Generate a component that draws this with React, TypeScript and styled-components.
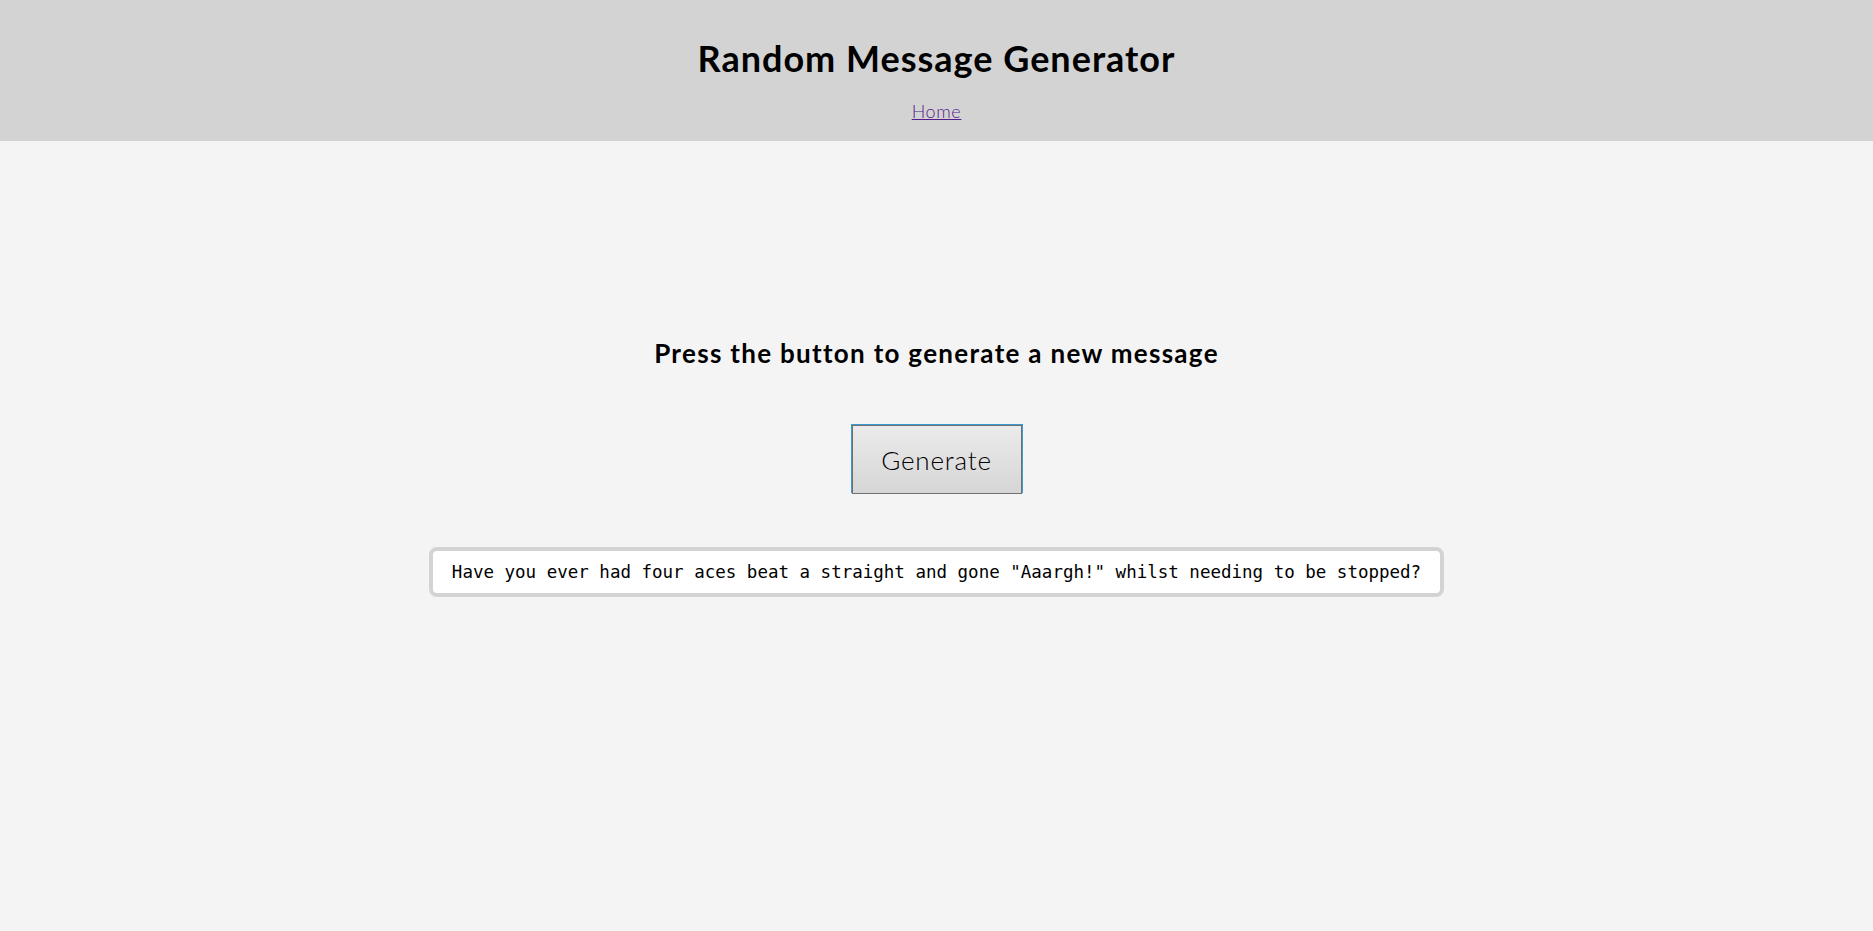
import styled, { createGlobalStyle } from "styled-components";

const GlobalStyle = createGlobalStyle`
	html, body {
		margin: 0;
		padding: 0;
		background: #f4f4f4;
		font-family: Lato, "Open Sans", sans-serif;
		color: #000;
	}
`;

const Page = styled.div`
	min-height: 931px;
	background: #f4f4f4;
`;

const Header = styled.header`
	background: #d3d3d3;
	height: 141px;
	box-sizing: border-box;
	padding-top: 38px;
	display: flex;
	flex-direction: column;
	align-items: center;
`;

const Title = styled.h1`
	margin: 0;
	font-size: 36px;
	line-height: 40px;
	font-weight: 700;
	letter-spacing: 1px;
`;

const Nav = styled.nav`
	margin-top: 23px;
	font-size: 18px;
	line-height: 20px;
`;

const NavLink = styled.a`
	color: #551a8b;
	font-weight: 300;
	letter-spacing: 0.6px;
	text-decoration: underline;
`;

const Main = styled.main`
	display: flex;
	flex-direction: column;
	align-items: center;
	padding-top: 197px;
`;

const Prompt = styled.h2`
	margin: 0;
	font-size: 26px;
	line-height: 30px;
	font-weight: 700;
	letter-spacing: 1.3px;
`;

const GenerateButton = styled.button`
	margin-top: 57px;
	width: 170px;
	height: 69px;
	font-family: Lato, "Open Sans", sans-serif;
	font-size: 26px;
	font-weight: 300;
	letter-spacing: 0.8px;
	color: #000;
	background: linear-gradient(#ebebeb, #d6d6d6);
	border: 1px solid #707070;
	box-shadow: -1px -1px 0 #3b9ad0, 1px -1px 0 #3b9ad0;
	cursor: pointer;
`;

const MessageBox = styled.div`
	margin-top: 53px;
	background: #fff;
	border: 4px solid #d3d3d3;
	border-radius: 8px;
	padding: 0 19px;
	height: 42px;
	display: flex;
	align-items: center;
	font-family: "DejaVu Sans Mono", "Liberation Mono", monospace;
	font-size: 17.5px;
	white-space: pre;
`;

export default function App() {
	return (
		<Page>
			<GlobalStyle />
			<Header>
				<Title>Random Message Generator</Title>
				<Nav>
					<NavLink href="#">Home</NavLink>
				</Nav>
			</Header>
			<Main>
				<Prompt>Press the button to generate a new message</Prompt>
				<GenerateButton>Generate</GenerateButton>
				<MessageBox>
					Have you ever had four aces beat a straight and gone "Aaargh!" whilst needing to be stopped?
				</MessageBox>
			</Main>
		</Page>
	);
}
